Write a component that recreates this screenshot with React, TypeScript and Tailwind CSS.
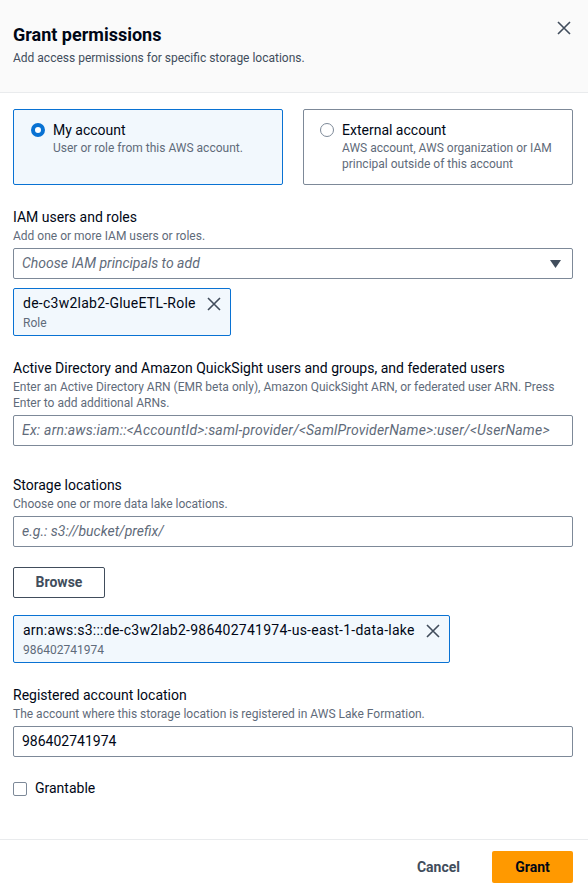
function Cross({size=14,className=''}:{size?:number;className?:string}){
  return(<svg width={size} height={size} viewBox="0 0 14 14" className={className}><path d="M1 1L13 13M13 1L1 13" stroke="#414d5c" strokeWidth="1.6" fill="none"/></svg>)
}

function Field({label,desc,children}:{label:string;desc:React.ReactNode;children:React.ReactNode}){
  return(<div>
    <div className="text-[14px] leading-[20px] text-[#000716]">{label}</div>
    <div className="text-[12px] leading-[16px] text-[#5f6b7a] mt-[1px]">{desc}</div>
    <div className="mt-[4px]">{children}</div>
  </div>)
}

function Token({title,sub}:{title:string;sub:string}){
  return(<div className="w-fit h-[48px] border border-[#0972d3] rounded-[2px] bg-[#f2f8fd] pl-[9px] pr-[9px] pt-[4px] flex gap-[11px]">
    <div className="whitespace-nowrap">
      <div className="text-[14px] leading-[20px] text-[#000716] tracking-[0.25px]">{title}</div>
      <div className="text-[12px] leading-[16px] text-[#5f6b7a] mt-[2px]">{sub}</div>
    </div>
    <Cross className="mt-[4px]"/>
  </div>)
}

export default function App(){
  return(<div className="w-[588px] h-[894px] bg-white flex flex-col" style={{fontFamily:'Roboto, "Open Sans", sans-serif'}}>
    <div className="h-[93px] bg-[#fafafa] border-b border-[#e9ebed] pl-[13px] pr-[17px] pt-[24px] flex justify-between">
      <div>
        <div className="text-[18px] leading-[22px] font-bold text-[#000716]">Grant permissions</div>
        <div className="text-[12px] leading-[16px] text-[#414d5c] mt-[4px]">Add access permissions for specific storage locations.</div>
      </div>
      <Cross className="mt-[-3px]"/>
    </div>
    <div className="flex-1 pl-[13px] pr-[15px] pt-[16px] flex flex-col">
      <div className="grid grid-cols-2 gap-[20px]">
        <div className="h-[76px] border border-[#0972d3] rounded-[2px] bg-[#f2f8fd] pl-[17px] pt-[10px] flex gap-[8px]">
          <div className="w-[14px] h-[14px] rounded-full border-[4px] border-[#0972d3] bg-white mt-[3px]"/>
          <div>
            <div className="text-[14px] leading-[20px] text-[#000716]">My account</div>
            <div className="text-[12px] leading-[16px] text-[#5f6b7a]">User or role from this AWS account.</div>
          </div>
        </div>
        <div className="h-[76px] border border-[#7d8998] rounded-[2px] pl-[16px] pt-[10px] flex gap-[8px]">
          <div className="w-[14px] h-[14px] rounded-full border border-[#7d8998] bg-white mt-[3px] shrink-0"/>
          <div>
            <div className="text-[14px] leading-[20px] text-[#000716]">External account</div>
            <div className="text-[12px] leading-[16px] text-[#5f6b7a]">AWS account, AWS organization or IAM principal outside of this account</div>
          </div>
        </div>
      </div>

      <div className="mt-[22px]">
        <Field label="IAM users and roles" desc="Add one or more IAM users or roles.">
          <div className="h-[31px] border border-[#7d8998] rounded-[2px] px-[8px] flex items-center justify-between">
            <span className="text-[14px] italic text-[#5f6b7a]">Choose IAM principals to add</span>
            <svg width="11" height="8" viewBox="0 0 11 8" className="mr-[3px]"><path d="M0 0h11L5.5 8z" fill="#414d5c"/></svg>
          </div>
        </Field>
        <div className="mt-[9px]"><Token title="de-c3w2lab2-GlueETL-Role" sub="Role"/></div>
      </div>

      <div className="mt-[22px]">
        <Field label="Active Directory and Amazon QuickSight users and groups, and federated users" desc={<>Enter an Active Directory ARN (EMR beta only), Amazon QuickSight ARN, or federated user ARN. Press<br/>Enter to add additional ARNs.</>}>
          <div className="h-[31px] border border-[#7d8998] rounded-[2px] px-[8px] flex items-center">
            <span className="text-[14px] italic text-[#5f6b7a] whitespace-nowrap overflow-hidden tracking-[0.2px]">Ex: arn:aws:iam::&lt;AccountId&gt;:saml-provider/&lt;SamlProviderName&gt;:user/&lt;UserName&gt;</span>
          </div>
        </Field>
      </div>

      <div className="mt-[29px]">
        <Field label="Storage locations" desc="Choose one or more data lake locations.">
          <div className="h-[31px] border border-[#7d8998] rounded-[2px] px-[8px] flex items-center">
            <span className="text-[14px] italic text-[#5f6b7a]">e.g.: s3://bucket/prefix/</span>
          </div>
        </Field>
        <button className="mt-[20px] w-[92px] h-[31px] border border-[#414d5c] rounded-[2px] text-[14px] font-bold text-[#414d5c]">Browse</button>
        <div className="mt-[17px]"><Token title="arn:aws:s3:::de-c3w2lab2-986402741974-us-east-1-data-lake" sub="986402741974"/></div>
      </div>

      <div className="mt-[22px]">
        <Field label="Registered account location" desc="The account where this storage location is registered in AWS Lake Formation.">
          <div className="h-[31px] border border-[#7d8998] rounded-[2px] px-[8px] flex items-center">
            <span className="text-[14px] text-[#000716]">986402741974</span>
          </div>
        </Field>
      </div>

      <div className="mt-[21px] flex items-center gap-[8px]">
        <div className="w-[14px] h-[14px] border border-[#7d8998] rounded-[2px]"/>
        <span className="text-[14px] text-[#000716]">Grantable</span>
      </div>
    </div>
    <div className="h-[55px] border-t border-[#e9ebed] px-[15px] flex items-center justify-end gap-[32px]">
      <span className="text-[14px] font-bold text-[#414d5c]">Cancel</span>
      <button className="w-[81px] h-[32px] bg-[#ff9900] rounded-[2px] text-[14px] font-bold text-[#000716]">Grant</button>
    </div>
  </div>)
}
